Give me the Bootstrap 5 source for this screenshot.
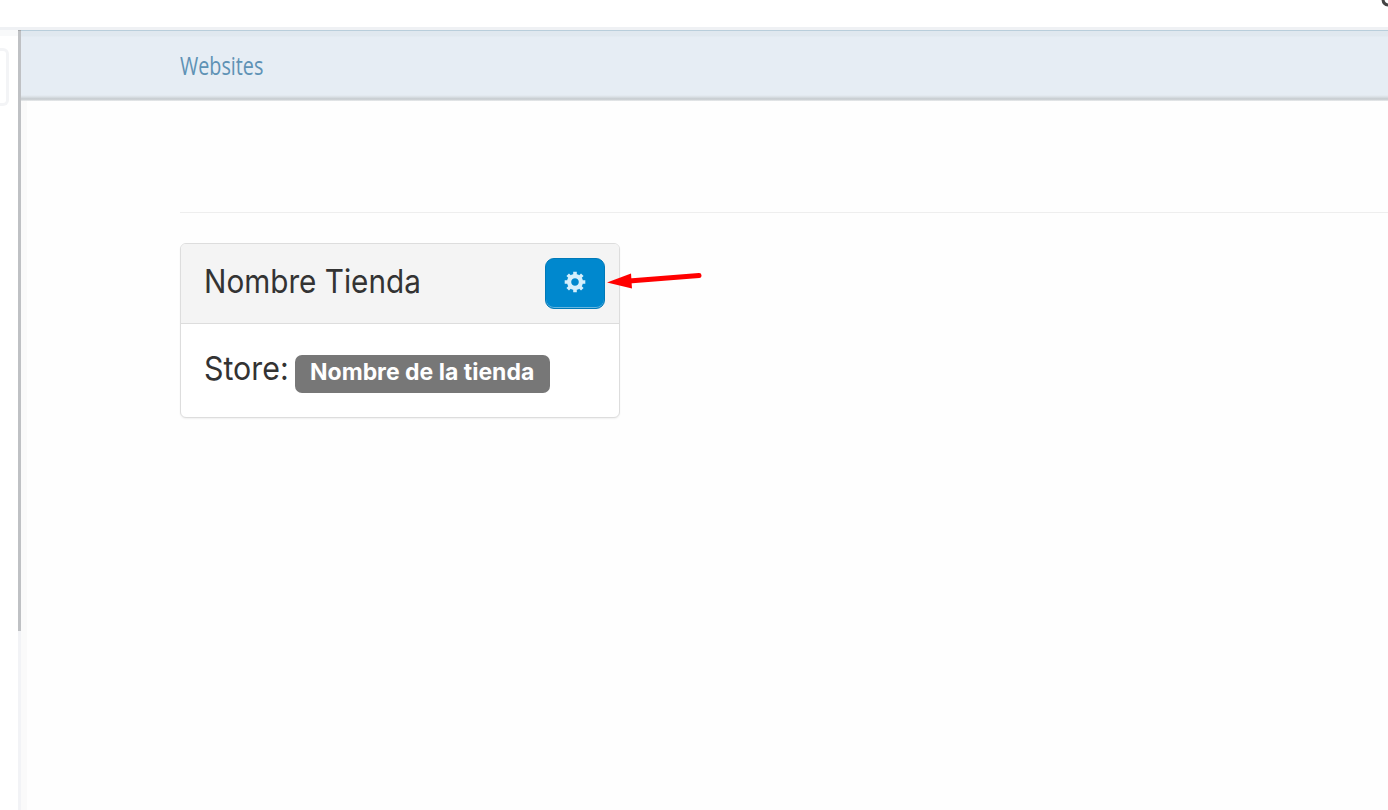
<!DOCTYPE html>
<html lang="es">
<head>
<meta charset="utf-8">
<meta name="viewport" content="width=device-width, initial-scale=1">
<title>Websites</title>
<link href="https://cdn.jsdelivr.net/npm/bootstrap@5.3.0/dist/css/bootstrap.min.css" rel="stylesheet">
<style>
body{height:810px;overflow:hidden;background:#fff;color:#333;font-family:"Open Sans","Noto Sans",sans-serif}
.topbar{height:30px;border-bottom:3px solid #eff1f4}
.topbar svg{width:8px;height:8px}
.side{width:18px;background:linear-gradient(#f8f9fa 0 6px,#fff 6px)}
.side-box{width:9px;height:58px;margin-top:18px;border:3px solid #f3f4f6;border-left:0;border-radius:0 6px 6px 0;background:#fff}
.track{width:3px;background:#f2f3f6}
.thumb{height:601px;background:linear-gradient(#a5a8ab 0 1px,#bfc1c4 1px)}
.content-pane{background:linear-gradient(90deg,#fafafa 0 6px,#fefefe 6px)}
.page-head{height:71px;padding:0 0 0 159px;border-top:1px solid #b9cedb;background:linear-gradient(#e0e8ef 0 5px,#e6edf4 6px 64px,#d9dfe4 66px,#c5cace 68px,#d5d9dc 69px,#eceeef 70px)}
.page-name{font-size:25px;line-height:34px;margin-top:17px;color:#5e92b5;transform:scaleX(.79);transform-origin:0 50%}
.rule{margin:111px 0 0 159px;height:1px;background:#eee}
.site-card{width:440px;height:175px;margin:30px 0 0 159px;border:1px solid #ddd;border-radius:6px;box-shadow:0 1px 2px rgba(0,0,0,.06);color:#333}
.site-card .card-header{height:80px;background:#f4f4f4;border-bottom:1px solid #ddd;padding:14px 14px 0 23px}
.site-card .card-body{padding:21px 23px 0}
.big{font-family:Inter,sans-serif;font-size:33px;font-weight:400;line-height:46px;white-space:nowrap;display:inline-block;transform-origin:0 50%}
.big-title{transform:scaleX(.9)}
.big-store{transform:scaleX(.92);width:91px}
.btn-gear{width:60px;height:51px;background:#0088ce;border:1px solid #0079b8;border-radius:9px;box-shadow:inset 0 -1px 0 #67b7e0;padding:0}
.btn-gear:hover{background:#0088ce}
.btn-gear svg{width:22px;height:22px;margin-top:-6px}
.store-tag{width:255px;height:38px;margin-top:10px;background:#777;border-radius:7px;color:#fff;padding:0 0 0 15px;text-align:left}
.store-tag span{display:inline-block;white-space:nowrap;font-family:Inter,sans-serif;font-size:23px;font-weight:700;line-height:34px}
.pointer{left:425px;top:27px;width:98px;height:24px;z-index:2}
</style>
</head>
<body class="d-flex flex-column">
<header class="topbar d-flex justify-content-end flex-shrink-0">
  <svg viewBox="0 0 8 8" aria-hidden="true"><path d="M3 -1C3 3 5 5 9 5" fill="none" stroke="#444" stroke-width="3"/></svg>
</header>
<div class="d-flex flex-grow-1">
  <aside class="side flex-shrink-0"><div class="side-box"></div></aside>
  <div class="track flex-shrink-0"><div class="thumb"></div></div>
  <main class="content-pane flex-grow-1">
    <nav class="page-head d-flex align-items-start"><span class="page-name">Websites</span></nav>
    <div class="rule"></div>
    <section class="card site-card">
      <div class="card-header d-flex justify-content-between align-items-start">
        <span class="big big-title">Nombre Tienda</span>
        <button class="btn btn-gear" type="button" aria-label="Configurar"><svg viewBox="-11 -11 22 22" fill="none" stroke="#d5effc"><circle r="5.9" stroke-width="4.2"/><path d="M0-7v-3.3M0 7v3.3M-7 0h-3.3M7 0h3.3M-5-5l-2.3-2.3M5 5l2.3 2.3M5-5l2.3-2.3M-5 5l-2.3 2.3" stroke-width="3.6"/></svg></button>
      </div>
      <div class="card-body d-flex align-items-start">
        <span class="big big-store">Store:</span>
        <div class="store-tag flex-shrink-0"><span>Nombre de la tienda</span></div>
      </div>
      <svg class="pointer position-absolute" viewBox="0 0 98 24" aria-hidden="true"><path d="M1 11.5 25 2.5 26 17.5Z" fill="#f00"/><path d="M23 10 93 4.5" stroke="#f00" stroke-width="5" stroke-linecap="round"/></svg>
    </section>
  </main>
</div>
<script src="https://cdn.jsdelivr.net/npm/bootstrap@5.3.0/dist/js/bootstrap.bundle.min.js"></script>
</body>
</html>
